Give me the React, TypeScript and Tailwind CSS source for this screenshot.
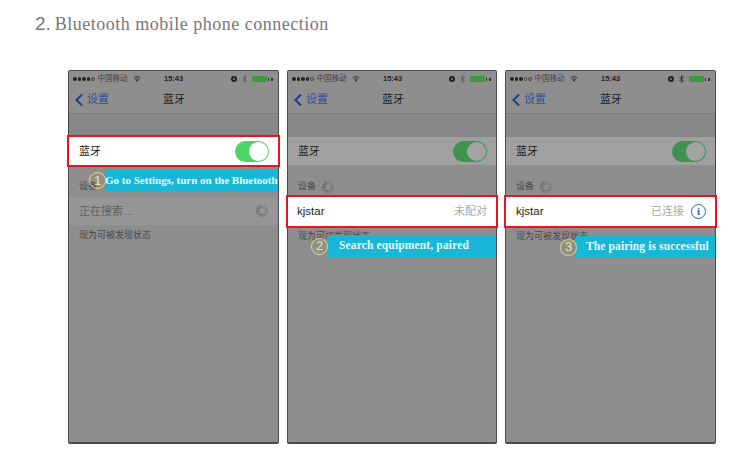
const cjk = "font-['Liberation_Sans','Noto_Sans_CJK_SC',sans-serif]";

function Spinner({ size = 14, color = "#5f5f5f" }: { size?: number; color?: string }) {
  const spokes = Array.from({ length: 12 }, (_, i) => i * 30);
  return (
    <svg width={size} height={size} viewBox="0 0 24 24">
      {spokes.map((a, i) => (
        <line
          key={a}
          x1="12"
          y1="1"
          x2="12"
          y2="7"
          stroke={color}
          strokeWidth="2.2"
          strokeOpacity={0.3 + (i / 12) * 0.7}
          transform={`rotate(${a} 12 12)`}
        />
      ))}
    </svg>
  );
}

function Switch({ dim }: { dim: boolean }) {
  return (
    <div
      className={`flex h-[21px] w-[34px] items-center justify-end rounded-full pr-px ${
        dim ? "bg-[#3f9350]" : "bg-[#4cd565]"
      }`}
    >
      <div
        className={`h-[19px] w-[19px] rounded-full ${dim ? "bg-[#a3a3a3]" : "bg-white"}`}
      />
    </div>
  );
}

function StatusBar({ dots, bt }: { dots: number; bt: string }) {
  return (
    <div className="flex h-[14px] items-center pl-[4px] pr-[5px] pt-[2px] text-[#222]">
      <div className="flex w-[67px] items-center gap-[2px]">
        <div className="flex gap-[1px]">
          {[0, 1, 2, 3, 4].map((i) => (
            <span
              key={i}
              className={`h-[3.5px] w-[3.5px] rounded-full ${
                i < dots ? "bg-[#222]" : "border-[0.5px] border-[#444]"
              }`}
            />
          ))}
        </div>
        <span className={`${cjk} ml-[1px] whitespace-nowrap text-[7.5px] text-[#444]`}>中国移动</span>
        <svg width="8" height="6" viewBox="0 0 16 12" className="ml-[3px] shrink-0">
          <path d="M1 4a10 10 0 0 1 14 0M4 7a6 6 0 0 1 8 0" fill="none" stroke="#333" strokeWidth="2" />
          <path d="M8 12 5.5 9a3.5 3.5 0 0 1 5 0z" fill="#333" />
        </svg>
      </div>
      <span className="ml-[24px] font-['Liberation_Sans',sans-serif] text-[7.5px] font-bold text-[#222]">
        15:43
      </span>
      <div className="ml-auto flex items-center gap-[5px]">
        <span className="flex h-[6px] w-[6px] items-center justify-center rounded-full bg-[#222]">
          <span className="h-[2px] w-[2px] rounded-full bg-[#888]" />
        </span>
        <svg width="5" height="8" viewBox="0 0 10 16">
          <path d="M1 4l8 8-4 3V1l4 3-8 8" fill="none" stroke={bt} strokeWidth="1.5" />
        </svg>
        <div className="flex items-center gap-px">
          <div className="h-[6px] w-[15px] bg-[#3f9a3f]" />
          <div className="h-[3px] w-[1px] bg-[#333]" />
          <div className="ml-px h-[3px] w-[2px] bg-[#333]" />
        </div>
      </div>
    </div>
  );
}

function NavBar() {
  return (
    <div className="flex h-[29px] items-center border-b border-[#7c7c7c] pt-[1px]">
      <div className="flex w-[46px] items-center pl-[5px]">
        <svg width="10" height="14" viewBox="0 0 10 14">
          <path d="M8 1.5 2.5 7 8 12.5" fill="none" stroke="#1c3f94" strokeWidth="2" />
        </svg>
        <span className={`${cjk} ml-[3px] whitespace-nowrap text-[11px] text-[#2f4f8f]`}>设置</span>
      </div>
      <span className={`${cjk} ml-[48px] text-[11px] text-[#222]`}>蓝牙</span>
    </div>
  );
}

function Callout({
  num,
  text,
  className,
  textClass,
}: {
  num: string;
  text: string;
  className: string;
  textClass: string;
}) {
  return (
    <div className={`absolute z-20 flex items-center ${className}`}>
      <span className="z-10 mr-[-1px] flex h-[17px] w-[17px] shrink-0 items-center justify-center rounded-full border border-[#e3dc8a] font-['Liberation_Sans',sans-serif] text-[13px] text-[#efe98f]">
        {num}
      </span>
      <div
        className={`flex h-full flex-1 items-center whitespace-nowrap bg-[#19b7d6] font-['Liberation_Serif',serif] font-bold text-[#e8f7fa] ${textClass}`}
      >
        {text}
      </div>
    </div>
  );
}

function Phone({
  step,
  dots,
  bt,
  className,
  children,
}: {
  step: 1 | 2 | 3;
  dots: number;
  bt: string;
  className: string;
  children?: React.ReactNode;
}) {
  const first = step === 1;
  return (
    <div className={`relative h-[374px] rounded-[2px] border border-b-2 border-[#4a4a4a] bg-[#8f8e8f] ${className}`}>
      <StatusBar dots={dots} bt={bt} />
      <NavBar />
      <div className="h-[23px] bg-[#878787]" />
      {/* bluetooth row */}
      <div
        className={`relative z-10 flex h-[28px] items-center justify-between pl-[10px] pr-[9px] ${
          first ? "bg-white outline-2 outline-[#e9141d]" : "bg-[#a0a0a0]"
        }`}
      >
        <span className={`${cjk} text-[11px] text-[#222]`}>蓝牙</span>
        <Switch dim={!first} />
      </div>
      <div className="flex h-[32px] items-center gap-[5px] pl-[10px] pt-[11px]">
        <span className={`${cjk} text-[9px] text-[#484848]`}>设备</span>
        {!first && <Spinner size={14} />}
      </div>
      {children}
      <div className={`${cjk} pl-[10px] pt-[4px] text-[9px] text-[#484848]`}>现为可被发现状态</div>
    </div>
  );
}

export default function App() {
  return (
    <div className="h-[459px] w-[750px] overflow-hidden bg-white">
      <h1 className="flex h-[70px] items-baseline pl-[35px] pt-[10px] font-normal text-[#777]">
        <span className="font-['Liberation_Sans',sans-serif] text-[19px]">2.</span>
        <span className="ml-[4px] font-['Liberation_Serif',serif] text-[18px] tracking-[0.5px]">
          Bluetooth mobile phone connection
        </span>
      </h1>
      <div className="flex gap-[8px] pl-[68px]">
        <Phone step={1} dots={4} bt="#555" className="w-[211px]">
          <div className="flex h-[28px] items-center justify-between bg-[#969696] pl-[10px] pr-[9px]">
            <span className={`${cjk} text-[11px] text-[#5f5f5f]`}>正在搜索…</span>
            <Spinner size={14} color="#5f5f5f" />
          </div>
          <Callout
            num="1"
            text="Go to Settings, turn on the Bluetooth"
            className="left-[20px] top-[99px] h-[21px] w-[189px]"
            textClass="text-[11px]"
          />
        </Phone>
        <Phone step={2} dots={4} bt="#555" className="w-[210px]">
          <div className="relative z-10 flex h-[29px] items-center justify-between bg-white pl-[9px] pr-[9px] outline-2 outline-[#e9141d]">
            <span className="font-['Liberation_Sans',sans-serif] text-[11.5px] text-[#222]">kjstar</span>
            <span className={`${cjk} text-[11px] text-[#a8a8a8]`}>未配对</span>
          </div>
          <Callout
            num="2"
            text="Search equipment, paired"
            className="left-[23px] top-[164px] h-[22px] w-[185px]"
            textClass="pl-[12px] text-[11.5px] tracking-[0.15px]"
          />
        </Phone>
        <Phone step={3} dots={3} bt="#222" className="w-[211px]">
          <div className="relative z-10 flex h-[29px] items-center bg-white pl-[10px] pr-[9px] outline-2 outline-[#e9141d]">
            <span className="font-['Liberation_Sans',sans-serif] text-[11.5px] text-[#222]">kjstar</span>
            <span className={`${cjk} ml-auto text-[11px] text-[#a8a8a8]`}>已连接</span>
            <span className="ml-[7px] flex h-[15px] w-[15px] items-center justify-center rounded-full border border-[#2b5fc0] font-['Liberation_Serif',serif] text-[11px] font-bold text-[#2b5fc0]">
              i
            </span>
          </div>
          <Callout
            num="3"
            text="The pairing is successful"
            className="left-[54px] top-[165px] h-[22px] w-[155px]"
            textClass="pl-[10px] text-[11.5px] tracking-[0.12px]"
          />
        </Phone>
      </div>
    </div>
  );
}
